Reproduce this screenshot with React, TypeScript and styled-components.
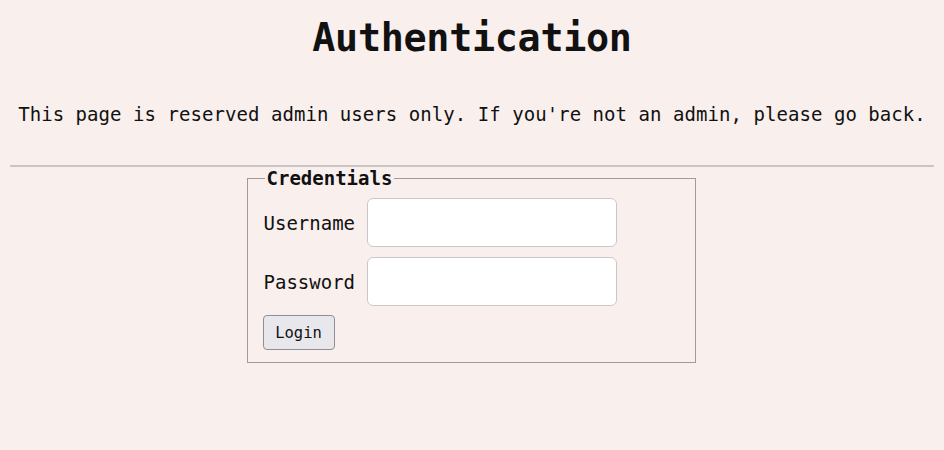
import React from "react";
import styled, { createGlobalStyle } from "styled-components";

const Global = createGlobalStyle`
  html, body {
    margin: 0;
    padding: 0;
    background: #f9efed;
  }
  body {
    font-family: "DejaVu Sans Mono", "Liberation Mono", monospace;
    color: #111;
  }
`;

const Page = styled.main`
  padding: 0 10px;
  display: flex;
  flex-direction: column;
`;

const Title = styled.h1`
  margin: 15px 0 0;
  text-align: center;
  font-size: 38.4px;
  line-height: 46px;
  font-weight: bold;
  letter-spacing: -0.3px;
`;

const Notice = styled.p`
  margin: 41px 0 0;
  text-align: center;
  font-size: 19px;
  line-height: 24px;
  letter-spacing: 0.05px;
`;

const Rule = styled.hr`
  margin: 39px 0 0;
  border: none;
  border-top: 2px solid #c9c5c4;
  height: 0;
`;

const Fieldset = styled.fieldset`
  box-sizing: border-box;
  width: 449px;
  margin: 0 auto;
  padding: 9px 16px 12px;
  border: 1px solid #a09c9c;
  display: flex;
  flex-direction: column;
  gap: 10px;
  position: relative;
  left: -1px;
`;

const Legend = styled.legend`
  padding: 0 2px;
  margin-left: 1px;
  font-size: 19px;
  font-weight: bold;
  line-height: 22px;
`;

const Row = styled.div`
  display: flex;
  align-items: center;
  gap: 12px;
`;

const Label = styled.label`
  font-size: 19px;
  width: 91px;
  white-space: nowrap;
`;

const Input = styled.input`
  box-sizing: border-box;
  width: 250px;
  height: 49px;
  border: 1px solid #ccc7c7;
  border-radius: 6px;
  background: #fff;
  padding: 0 10px;
  font-family: inherit;
  font-size: 16px;
`;

const Button = styled.button`
  align-self: flex-start;
  box-sizing: border-box;
  width: 72px;
  height: 35px;
  margin: -1px 0 0 -1px;
  border: 1px solid #8e8e94;
  border-radius: 4px;
  background: #e8e7ec;
  font-family: "DejaVu Sans Mono", monospace;
  font-size: 15.5px;
  color: #111;
  padding: 0;
`;

export default function App() {
  return (
    <>
      <Global />
      <Page>
        <Title>Authentication</Title>
        <Notice>
          This page is reserved admin users only. If you're not an admin, please go back.
        </Notice>
        <Rule />
        <Fieldset>
          <Legend>Credentials</Legend>
          <Row>
            <Label htmlFor="username">Username</Label>
            <Input id="username" type="text" />
          </Row>
          <Row>
            <Label htmlFor="password">Password</Label>
            <Input id="password" type="password" />
          </Row>
          <Button type="button">Login</Button>
        </Fieldset>
      </Page>
    </>
  );
}
